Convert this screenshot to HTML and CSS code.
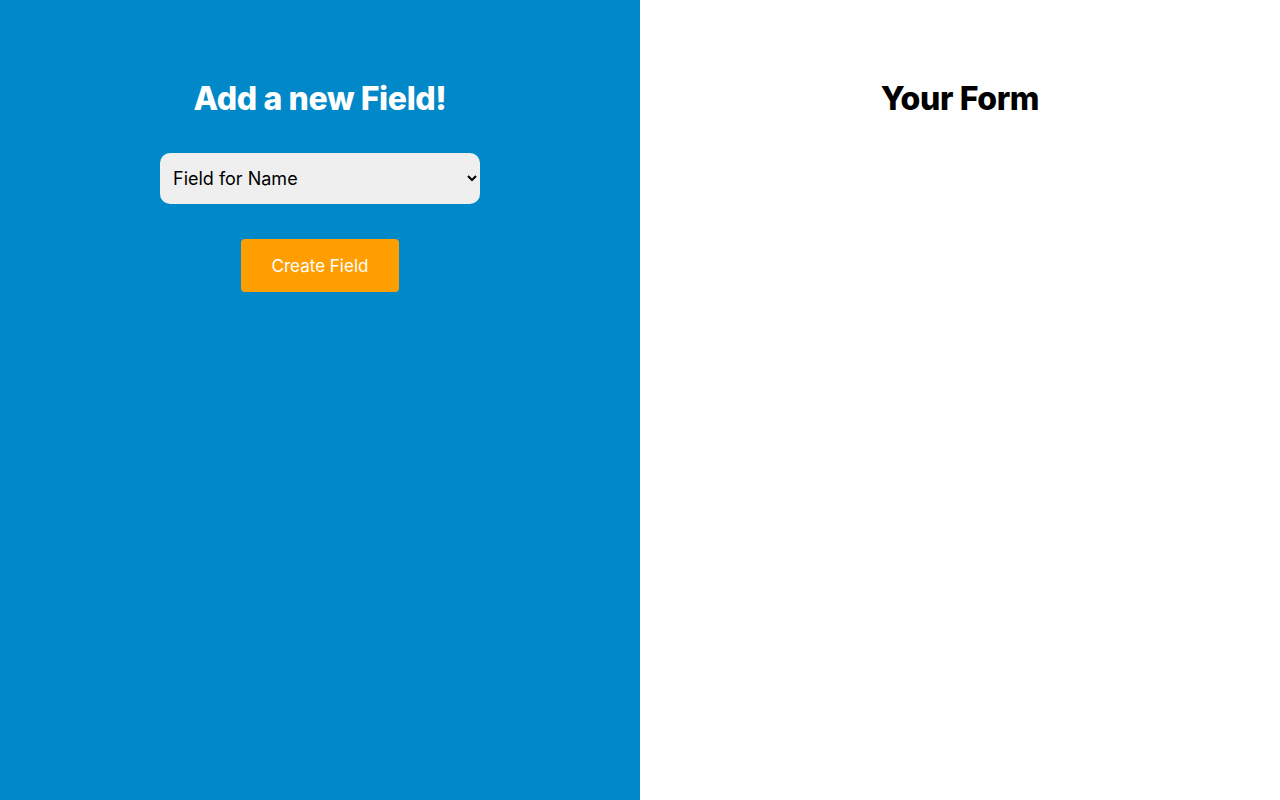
FILE: index.html
```html
<!DOCTYPE html>
<html>
<head>
<meta charset="utf-8">
<link rel="stylesheet" href="styles.css">
</head>
<body>
<div class="app">
  <section class="panel builder">
    <h1 class="title light">Add a new Field!</h1>
    <select class="field-select">
      <option>Field for Name</option>
      <option>Field for Email</option>
      <option>Field for Phone</option>
    </select>
    <button class="create-btn">Create Field</button>
  </section>
  <section class="panel preview">
    <h1 class="title">Your Form</h1>
  </section>
</div>
</body>
</html>
```
FILE: styles.css
```css
html, body {
  margin: 0;
  padding: 0;
  height: 100%;
}
body {
  font-family: Inter, "Noto Sans", sans-serif;
}
.app {
  display: flex;
  height: 100vh;
}
.panel {
  flex: 1;
  display: flex;
  flex-direction: column;
  align-items: center;
  padding-top: 79px;
}
.builder {
  background: #0088c8;
}
.preview {
  background: #ffffff;
}
.title {
  margin: 0;
  font-size: 32px;
  font-weight: 800;
  line-height: 40px;
  color: #000;
  letter-spacing: -0.38px;
}
.title.light {
  color: #fff;
}
.field-select {
  margin-top: 34px;
  width: 320px;
  height: 51px;
  padding: 0 9px;
  font-family: Inter, "Noto Sans", sans-serif;
  font-size: 18px;
  color: #000;
  background: #efefef;
  border: none;
  border-radius: 10px;
}
.create-btn {
  margin-top: 35px;
  width: 158px;
  height: 53px;
  font-family: Inter, "Noto Sans", sans-serif;
  font-size: 17px;
  color: #fff;
  background: #ff9e00;
  border: none;
  border-radius: 4px;
}
```
